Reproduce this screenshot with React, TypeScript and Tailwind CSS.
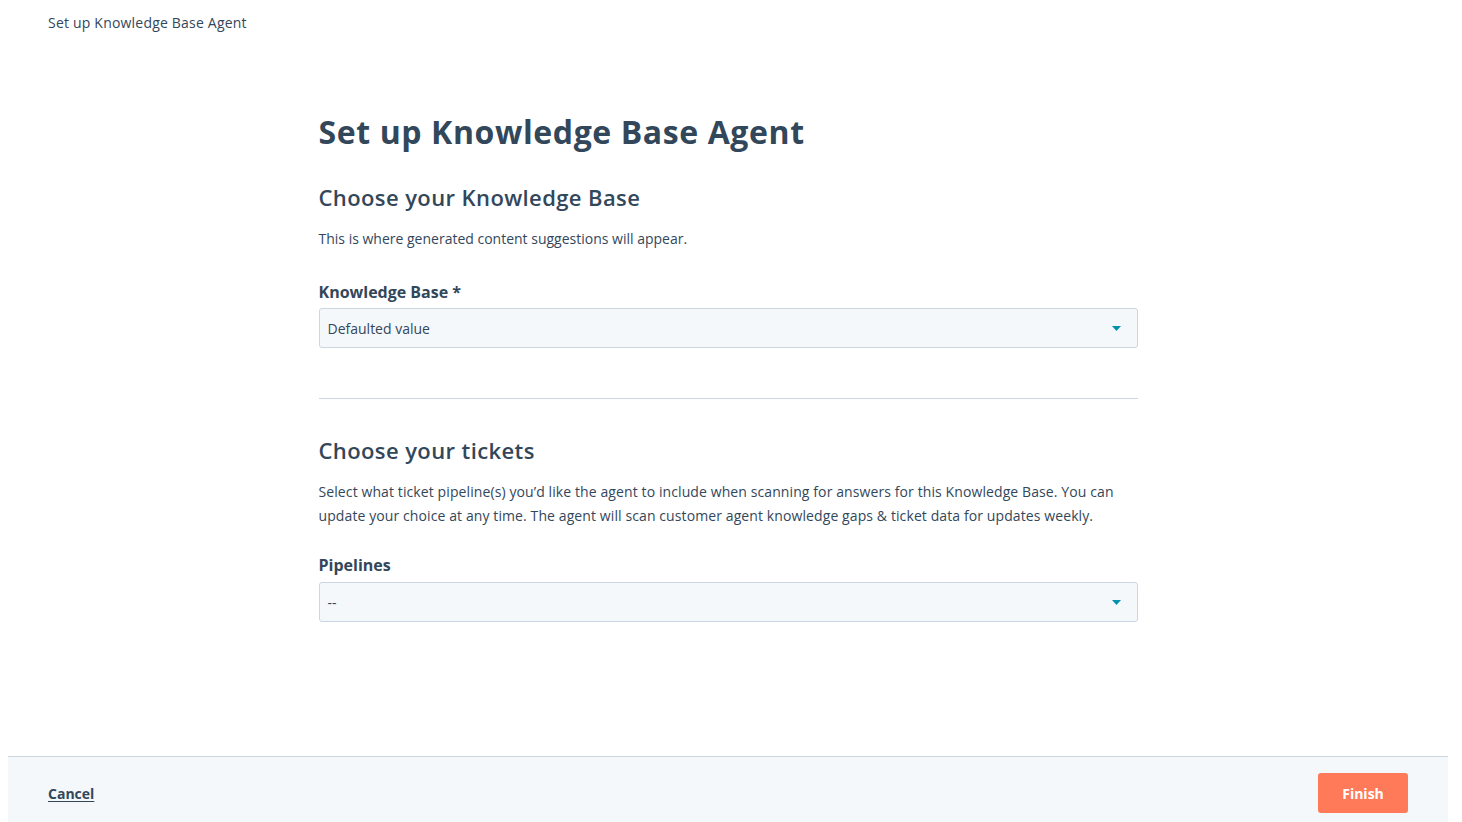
import { useState } from 'react'

const font = { fontFamily: '"Open Sans", "Noto Sans", Arial, sans-serif' }

function Caret() {
  return (
    <svg width="9" height="5" viewBox="0 0 9 5" aria-hidden="true">
      <path d="M0 0h9L4.5 5z" fill="#0091ae" />
    </svg>
  )
}

function SelectField({ value }: { value: string }) {
  return (
    <button
      type="button"
      className="flex items-center justify-between w-full h-10 pl-[8px] pr-[16px] bg-[#f5f8fa] border border-[#cbd6e2] rounded-[3px] text-[14px] text-[#33475b] text-left"
    >
      <span>{value}</span>
      <Caret />
    </button>
  )
}

export default function App() {
  const [kb] = useState('Defaulted value')
  const [pipelines] = useState('--')

  return (
    <div className="h-[822px] overflow-hidden flex flex-col text-[#33475b] bg-white" style={font}>
      {/* page header */}
      <div className="pl-[48px] pt-[14px] text-[14px] leading-[18px] tracking-[0.2px]">Set up Knowledge Base Agent</div>

      <main className="flex-1 flex justify-center pl-[8px] pr-[14px]">
        <div className="w-[819px] pt-[80px]">
          <h1 className="text-[32px] leading-[40px] font-bold tracking-[0.6px]">Set up Knowledge Base Agent</h1>

          <section className="mt-[31px]">
            <h2 className="text-[22px] leading-[28px] font-semibold tracking-[0.4px]">Choose your Knowledge Base</h2>
            <p className="mt-[16px] text-[14px] leading-[24px]">This is where generated content suggestions will appear.</p>

            <label className="block mt-[29px] text-[16px] leading-[24px] font-bold">Knowledge Base *</label>
            <div className="mt-[4px]">
              <SelectField value={kb} />
            </div>
          </section>

          <hr className="mt-[50px] border-0 border-t border-[#cbd6e2]" />

          <section className="mt-[37px]">
            <h2 className="text-[22px] leading-[28px] font-semibold tracking-[0.4px]">Choose your tickets</h2>
            <p className="mt-[16px] text-[14px] leading-[24px] tracking-[0.1px]">
              Select what ticket pipeline(s) you’d like the agent to include when scanning for answers for this Knowledge Base. You can
              update your choice at any time. The agent will scan customer agent knowledge gaps &amp; ticket data for updates weekly.
            </p>

            <label className="block mt-[25px] text-[16px] leading-[24px] font-bold">Pipelines</label>
            <div className="mt-[5px]">
              <SelectField value={pipelines} />
            </div>
          </section>
        </div>
      </main>

      {/* footer actions, runs a little past the bottom edge */}
      <footer className="shrink-0 ml-[8px] mr-[14px] -mb-[8px] h-[74px] flex items-start justify-between pt-[16px] px-[40px] bg-[#f5f8fa] border-t border-[#cbd6e2]">
        <button type="button" className="h-10 text-[14px] font-bold underline underline-offset-2 text-[#33475b]">
          Cancel
        </button>
        <button type="button" className="w-[90px] h-10 rounded-[3px] bg-[#ff7a59] text-white text-[14px] font-bold">
          Finish
        </button>
      </footer>
    </div>
  )
}
